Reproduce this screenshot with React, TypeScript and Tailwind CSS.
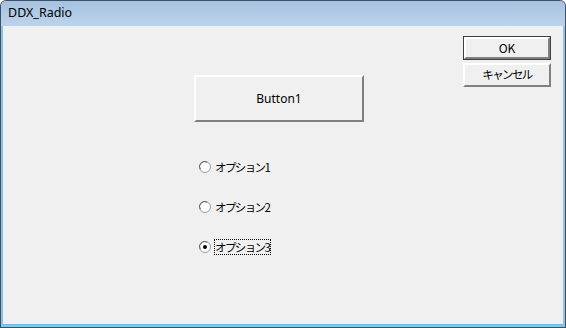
import React from "react";

const jp = '"Noto Sans CJK JP", "Noto Sans", sans-serif';

function Radio({ label, checked, focused }: { label: string; checked?: boolean; focused?: boolean }) {
  return (
    <div className="flex items-center h-[16px]">
      <svg width="12" height="12" viewBox="0 0 12 12" className="shrink-0">
        <circle cx="6" cy="6" r="5.5" fill="#ffffff" stroke="#9a9a9a" />
        <path d="M1.3 8.2 A5 5 0 0 1 8.2 1.3" fill="none" stroke="#606060" strokeWidth="1" />
        {checked && <circle cx="6" cy="6" r="2" fill="#000000" />}
      </svg>
      <span
        className={
          "ml-[3px] pl-[1px] pr-[2px] h-[16px] flex items-center text-[11.5px] tracking-[-1.6px] leading-[16px] text-black " +
          (focused ? "outline outline-1 outline-dotted outline-black -outline-offset-1" : "")
        }
        style={{ fontFamily: jp }}
      >
        {label}
      </span>
    </div>
  );
}

function Btn({ children, def, cls }: { children: React.ReactNode; def?: boolean; cls: string }) {
  return (
    <div
      className={
        "flex items-center justify-center bg-[#f0f0f0] text-[12px] text-black " +
        (def ? "border border-[#404040] " : "") +
        cls
      }
      style={{ fontFamily: jp }}
    >
      <div className="w-full h-full flex items-center justify-center border-t-2 border-l-2 border-t-white border-l-white border-r-2 border-b-2 border-r-[#808080] border-b-[#808080]">
        {children}
      </div>
    </div>
  );
}

export default function App() {
  return (
    <div className="w-[566px] h-[328px] bg-[#3d5166] rounded-t-[6px] p-[1px] flex flex-col">
      <div className="flex-1 flex flex-col rounded-t-[5px] bg-[#8fc3e6] overflow-hidden">
        <div
          className="h-[25px] shrink-0 bg-gradient-to-b from-[#a6c2df] to-[#bcd3eb] flex items-center pl-[7px] text-[12.5px] text-black"
          style={{ fontFamily: '"Noto Sans", "Liberation Sans", sans-serif' }}
        >
          DDX_Radio
        </div>
        <div className="flex-1 mx-[2px] mb-[2px] border-b border-b-[#5ec3ec] flex bg-[#f0f0f0]">
          <div className="flex-1 flex flex-col pl-[191px] pt-[49px]">
            <Btn cls="w-[170px] h-[47px]">
              <span style={{ fontFamily: '"Noto Sans", sans-serif' }}>Button1</span>
            </Btn>
            <div className="flex flex-col gap-[24px] pl-[5px] mt-[37px]">
              <Radio label="オプション1" />
              <Radio label="オプション2" />
              <Radio label="オプション3" checked focused />
            </div>
          </div>
          <div className="flex flex-col pt-[10px] pr-[12px] gap-[3px]">
            <Btn def cls="w-[88px] h-[24px]">OK</Btn>
            <Btn cls="w-[88px] h-[24px]">
              <span className="text-[11.5px] tracking-[-1.6px]">キャンセル</span>
            </Btn>
          </div>
        </div>
      </div>
    </div>
  );
}
